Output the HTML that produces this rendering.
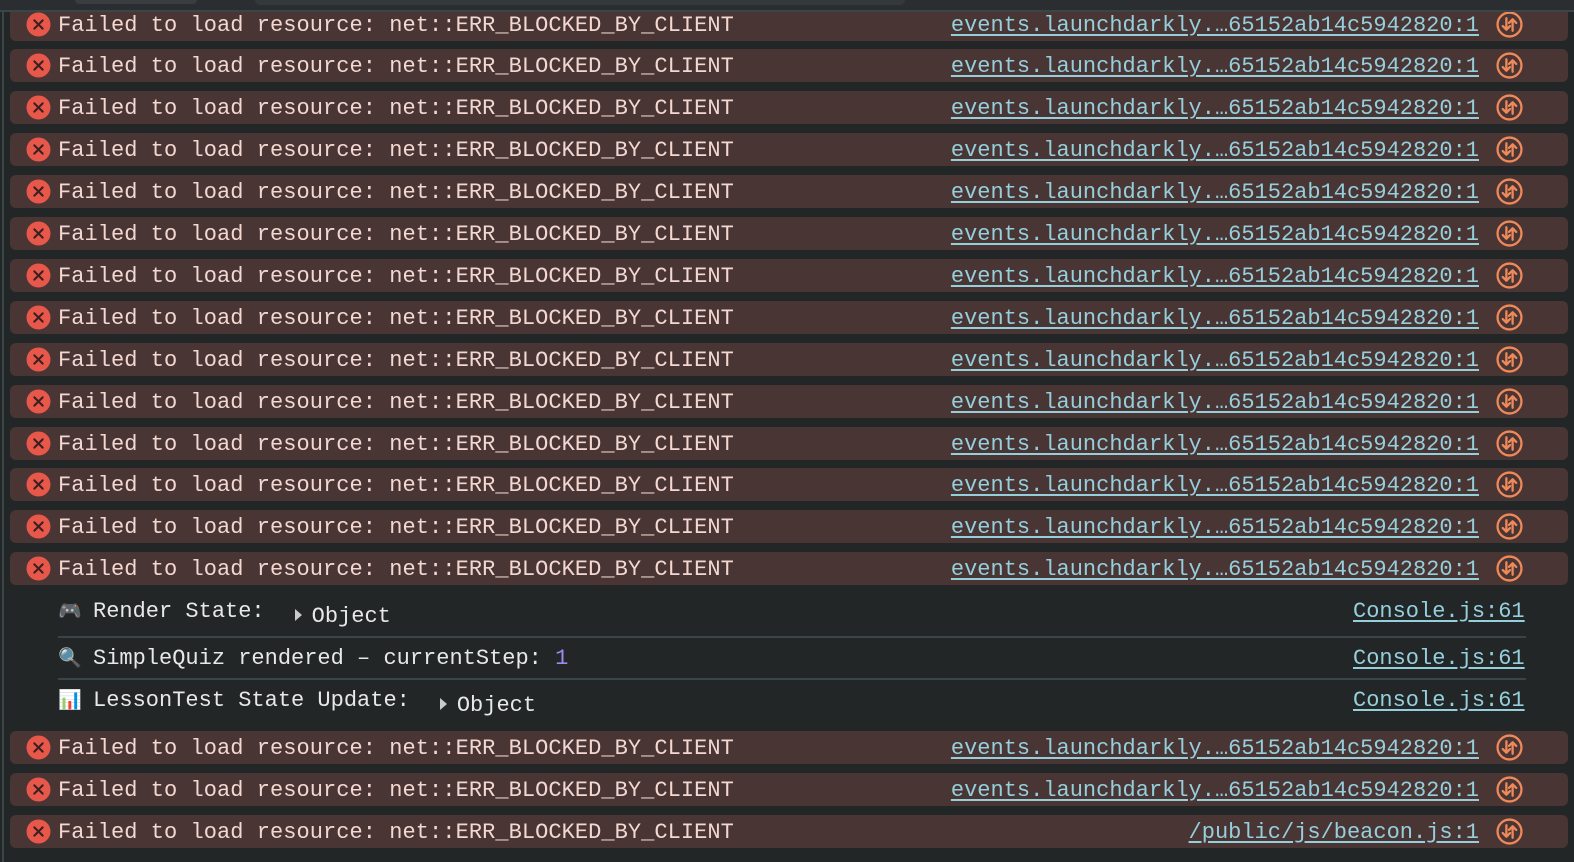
<!DOCTYPE html>
<html><head><meta charset="utf-8">
<style>
*{margin:0;padding:0;box-sizing:border-box}
body{width:1574px;height:862px;overflow:hidden;background:#232627;font-family:"Liberation Mono",monospace;font-size:22px;position:relative}
.top{position:absolute;left:0;top:0;width:1574px;height:12px;background:#2b2e30;border-bottom:2px solid #3a4548}
.top .a{position:absolute;left:75px;top:-6px;width:122px;height:10px;background:#3a3d40;border-radius:4px}
.top .b{position:absolute;left:255px;top:-6px;width:650px;height:11px;background:#34393b;border-radius:6px}
.lb{position:absolute;left:2px;top:12px;width:2px;height:850px;background:#3a4548}
.e{position:absolute;left:10px;width:1558px;height:33px;background:#4a3535;border-radius:6px;color:#f3d7d1}
.e .t{position:absolute;left:48px;top:5px;white-space:pre;letter-spacing:0.05px}
.e .x{position:absolute;left:16px;top:4px;width:25px;height:25px}
.e .l{position:absolute;right:89px;top:5px;color:#95cfdc;text-decoration:underline;text-underline-offset:3px}
.e .n{position:absolute;left:1486px;top:3px;width:27px;height:27px}
.g{position:absolute;left:58px;color:#e6e8ea;white-space:pre}
.g .ic{display:inline-block;width:22px;margin-right:13px;font-size:19px;font-family:"DejaVu Sans",sans-serif}
.g .l{position:absolute;left:1290px;top:0;color:#95cfdc;text-decoration:underline;text-underline-offset:3px}
.tri{display:inline-block;width:0;height:0;border-left:7px solid #c8cacc;border-top:6px solid transparent;border-bottom:6px solid transparent;margin:0 10px 0 30px;vertical-align:middle;position:relative;top:4px}
.sep{position:absolute;left:58px;width:1468px;height:2px;background:#3a4548}
</style></head><body>
<svg width="0" height="0" style="position:absolute">
<defs>
<symbol id="x" viewBox="0 0 24 24"><circle cx="12" cy="12" r="11.5" fill="#e8584a"/><path d="M8 8L16 16M16 8L8 16" stroke="#3a2020" stroke-width="2" stroke-linecap="round"/></symbol>
<symbol id="n" viewBox="0 0 26 26"><circle cx="13" cy="13" r="11.5" fill="none" stroke="#ee8a5a" stroke-width="2.2"/><path d="M10 7V18M6.5 14.5L10 18L13.5 14.5M16 19V8M12.5 11.5L16 8L19.5 11.5" fill="none" stroke="#ee8a5a" stroke-width="2.2" stroke-linecap="round" stroke-linejoin="round"/></symbol>
</defs></svg>

<div class="e" style="top:7.5px"><svg class="x"><use href="#x"/></svg><span class="t">Failed to load resource: net::ERR_BLOCKED_BY_CLIENT</span><span class="l">events.launchdarkly.…65152ab14c5942820:1</span><svg class="n"><use href="#n"/></svg></div>
<div class="e" style="top:49.4px"><svg class="x"><use href="#x"/></svg><span class="t">Failed to load resource: net::ERR_BLOCKED_BY_CLIENT</span><span class="l">events.launchdarkly.…65152ab14c5942820:1</span><svg class="n"><use href="#n"/></svg></div>
<div class="e" style="top:91.3px"><svg class="x"><use href="#x"/></svg><span class="t">Failed to load resource: net::ERR_BLOCKED_BY_CLIENT</span><span class="l">events.launchdarkly.…65152ab14c5942820:1</span><svg class="n"><use href="#n"/></svg></div>
<div class="e" style="top:133.2px"><svg class="x"><use href="#x"/></svg><span class="t">Failed to load resource: net::ERR_BLOCKED_BY_CLIENT</span><span class="l">events.launchdarkly.…65152ab14c5942820:1</span><svg class="n"><use href="#n"/></svg></div>
<div class="e" style="top:175.1px"><svg class="x"><use href="#x"/></svg><span class="t">Failed to load resource: net::ERR_BLOCKED_BY_CLIENT</span><span class="l">events.launchdarkly.…65152ab14c5942820:1</span><svg class="n"><use href="#n"/></svg></div>
<div class="e" style="top:217px"><svg class="x"><use href="#x"/></svg><span class="t">Failed to load resource: net::ERR_BLOCKED_BY_CLIENT</span><span class="l">events.launchdarkly.…65152ab14c5942820:1</span><svg class="n"><use href="#n"/></svg></div>
<div class="e" style="top:258.9px"><svg class="x"><use href="#x"/></svg><span class="t">Failed to load resource: net::ERR_BLOCKED_BY_CLIENT</span><span class="l">events.launchdarkly.…65152ab14c5942820:1</span><svg class="n"><use href="#n"/></svg></div>
<div class="e" style="top:300.8px"><svg class="x"><use href="#x"/></svg><span class="t">Failed to load resource: net::ERR_BLOCKED_BY_CLIENT</span><span class="l">events.launchdarkly.…65152ab14c5942820:1</span><svg class="n"><use href="#n"/></svg></div>
<div class="e" style="top:342.7px"><svg class="x"><use href="#x"/></svg><span class="t">Failed to load resource: net::ERR_BLOCKED_BY_CLIENT</span><span class="l">events.launchdarkly.…65152ab14c5942820:1</span><svg class="n"><use href="#n"/></svg></div>
<div class="e" style="top:384.6px"><svg class="x"><use href="#x"/></svg><span class="t">Failed to load resource: net::ERR_BLOCKED_BY_CLIENT</span><span class="l">events.launchdarkly.…65152ab14c5942820:1</span><svg class="n"><use href="#n"/></svg></div>
<div class="e" style="top:426.5px"><svg class="x"><use href="#x"/></svg><span class="t">Failed to load resource: net::ERR_BLOCKED_BY_CLIENT</span><span class="l">events.launchdarkly.…65152ab14c5942820:1</span><svg class="n"><use href="#n"/></svg></div>
<div class="e" style="top:468.4px"><svg class="x"><use href="#x"/></svg><span class="t">Failed to load resource: net::ERR_BLOCKED_BY_CLIENT</span><span class="l">events.launchdarkly.…65152ab14c5942820:1</span><svg class="n"><use href="#n"/></svg></div>
<div class="e" style="top:510.3px"><svg class="x"><use href="#x"/></svg><span class="t">Failed to load resource: net::ERR_BLOCKED_BY_CLIENT</span><span class="l">events.launchdarkly.…65152ab14c5942820:1</span><svg class="n"><use href="#n"/></svg></div>
<div class="e" style="top:552.2px"><svg class="x"><use href="#x"/></svg><span class="t">Failed to load resource: net::ERR_BLOCKED_BY_CLIENT</span><span class="l">events.launchdarkly.…65152ab14c5942820:1</span><svg class="n"><use href="#n"/></svg></div>

<div class="g" style="top:599px"><span class="ic">🎮</span>Render State:<span class="tri"></span><span style="position:relative;top:5px">Object</span><span class="l" style="left:1295px">Console.js:61</span></div>
<div class="sep" style="top:636px"></div>
<div class="g" style="top:646px"><span class="ic">🔍</span>SimpleQuiz rendered – currentStep: <span style="color:#9d8cf0">1</span><span class="l" style="left:1295px">Console.js:61</span></div>
<div class="sep" style="top:678px"></div>
<div class="g" style="top:688px"><span class="ic">📊</span>LessonTest State Update:<span class="tri"></span><span style="position:relative;top:5px">Object</span><span class="l" style="left:1295px">Console.js:61</span></div>

<div class="e" style="top:730.5px"><svg class="x"><use href="#x"/></svg><span class="t">Failed to load resource: net::ERR_BLOCKED_BY_CLIENT</span><span class="l">events.launchdarkly.…65152ab14c5942820:1</span><svg class="n"><use href="#n"/></svg></div>
<div class="e" style="top:772.5px"><svg class="x"><use href="#x"/></svg><span class="t">Failed to load resource: net::ERR_BLOCKED_BY_CLIENT</span><span class="l">events.launchdarkly.…65152ab14c5942820:1</span><svg class="n"><use href="#n"/></svg></div>
<div class="e" style="top:814.5px"><svg class="x"><use href="#x"/></svg><span class="t">Failed to load resource: net::ERR_BLOCKED_BY_CLIENT</span><span class="l">/public/js/beacon.js:1</span><svg class="n"><use href="#n"/></svg></div>

<div class="top"><div class="a"></div><div class="b"></div></div>
<div class="lb"></div>
</body></html>
